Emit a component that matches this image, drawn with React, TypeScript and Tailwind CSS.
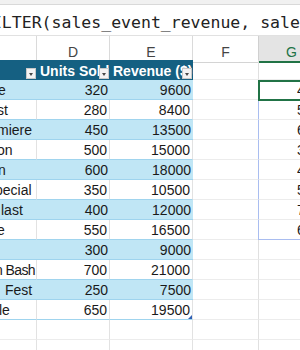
const GRID = "grid grid-cols-[37px_73px_83px_65px_42px]";

type Row = {
  name: string;
  nameCls: string;
  units: number;
  revenue: number;
  spill?: string;
};

// visible tails of the event names in column C (start of each name is scrolled off)
const ROWS: Row[] = [
  { name: "e", nameCls: "ml-[-2px]", units: 320, revenue: 9600, spill: "450" },
  { name: "st", nameCls: "ml-[-3px]", units: 280, revenue: 8400, spill: "500" },
  { name: "miere", nameCls: "ml-[-3px]", units: 450, revenue: 13500, spill: "600" },
  { name: "on", nameCls: "ml-[-3px]", units: 500, revenue: 15000, spill: "350" },
  { name: "n", nameCls: "ml-[-2px]", units: 600, revenue: 18000, spill: "400" },
  { name: "pecial", nameCls: "ml-[-5px]", units: 350, revenue: 10500, spill: "550" },
  { name: "last", nameCls: "ml-[1px]", units: 400, revenue: 12000, spill: "700" },
  { name: "e", nameCls: "ml-[-3px]", units: 550, revenue: 16500, spill: "650" },
  { name: "", nameCls: "", units: 300, revenue: 9000 },
  { name: "n Bash", nameCls: "ml-[-5px] tracking-[-0.6px]", units: 700, revenue: 21000 },
  { name: "Fest", nameCls: "ml-[5px]", units: 250, revenue: 7500 },
  { name: "le", nameCls: "ml-[-1px]", units: 650, revenue: 19500 },
];

function FilterButton() {
  return (
    <span className="absolute right-[1px] bottom-[1px] flex h-[11px] w-[10px] items-center justify-center border border-[#c8c8c8] bg-[#f3f3f3]">
      <span className="mt-[2px] h-0 w-0 border-x-[2.5px] border-t-[3px] border-x-transparent border-t-[#474747]" />
    </span>
  );
}

function ColumnHeaders() {
  const cell = "border-b border-b-[#d4d4d4] pt-[8px] text-center text-[14px] leading-[17px] text-[#444]";
  return (
    <div className={`${GRID} h-[24px] bg-white`}>
      <div className={`${cell} border-r border-r-[#dadada]`} />
      <div className={`${cell} border-r border-r-[#dadada]`}>D</div>
      <div className={`${cell} border-r border-r-[#dadada]`}>E</div>
      <div className={cell}>F</div>
      <div className="border-l border-l-[#d0d0d0] border-b-2 border-b-[#217346] bg-[#e4e4e4] pl-[27px] pt-[8px] text-[14px] leading-[17px] text-[#217346]">
        G
      </div>
    </div>
  );
}

function TableHeader() {
  const head = "relative overflow-hidden whitespace-nowrap bg-[#156082] pl-[3px] pt-[3px] text-[14px] font-bold leading-[17px] text-white";
  return (
    <div className={`${GRID} h-[20px]`}>
      <div className={head}>
        <FilterButton />
      </div>
      <div className={head}>
        Units Sold
        <FilterButton />
      </div>
      <div className={head}>
        Revenue ($)
        <FilterButton />
      </div>
      <div className="border-b border-b-[#ececec]" />
      <div className="border-l border-l-[#e0e0e0] border-b border-b-[#ececec]" />
    </div>
  );
}

function DataRow({ row, index }: { row: Row; index: number }) {
  const banded = index % 2 === 0;
  const isLast = index === ROWS.length - 1;
  const base = banded
    ? "bg-[#c0e6f5] border-b border-b-[#9fd4ee]"
    : "bg-white border-b border-b-[#9fd4ee] border-r border-r-[#e2e2e2]";
  const txt = "pt-[2px] text-[14px] leading-[17px] text-[#1a1a1a] whitespace-nowrap";
  const inSpill = index < 8;

  return (
    <div className={`${GRID} h-[20px]`}>
      <div className={`${base} ${txt} overflow-hidden`}>
        <span className={`inline-block ${row.nameCls}`}>{row.name}</span>
      </div>
      <div className={`${base} ${txt} pr-[2px] text-right`}>{row.units}</div>
      <div className={`${base} ${txt} relative pr-[2px] text-right`}>
        {row.revenue}
        {isLast && (
          <svg className="absolute right-0 bottom-0" width="4" height="4" viewBox="0 0 4 4">
            <path d="M4 0V4H0Z" fill="#2f5fb3" />
          </svg>
        )}
      </div>
      <div className="border-b border-b-[#ececec]" />
      <div
        className={`relative overflow-visible whitespace-nowrap pl-[38px] ${txt} border-l ${
          inSpill ? "border-l-[#a9bdf0]" : "border-l-[#e0e0e0]"
        } border-b ${index === 7 ? "border-b-[#a9bdf0]" : "border-b-[#ececec]"}`}
      >
        <span className="block overflow-hidden">{row.spill ?? ""}</span>
        {index === 0 && (
          <div className="absolute top-0 left-[-1px] z-10 h-[21px] w-[60px] border-2 border-[#217346]" />
        )}
      </div>
    </div>
  );
}

function EmptyRow() {
  const c = "border-b border-b-[#ececec]";
  return (
    <div className={`${GRID} h-[20px]`}>
      <div className={`${c} border-r border-r-[#e2e2e2]`} />
      <div className={`${c} border-r border-r-[#e2e2e2]`} />
      <div className={`${c} border-r border-r-[#e2e2e2]`} />
      <div className={c} />
      <div className={`${c} border-l border-l-[#e0e0e0]`} />
    </div>
  );
}

export default function App() {
  return (
    <div className="h-[350px] w-[300px] overflow-hidden bg-white font-['Liberation_Sans',Arial,sans-serif]">
      {/* ribbon edge */}
      <div className="h-[5px] border-b border-b-[#d9d9d9] bg-[#f1f1f1]" />

      {/* formula bar */}
      <div className="h-[31px] overflow-hidden border-b border-b-[#e1e1e1] bg-white pt-[8px]">
        <div className="ml-[-18px] whitespace-nowrap font-['DejaVu_Sans_Mono',monospace] text-[16.5px] leading-[20px] text-[#222]">
          FILTER(sales_event_revenue, sales_event_revenue[Units Sold]&gt;320)
        </div>
      </div>

      <ColumnHeaders />
      <TableHeader />
      {ROWS.map((row, i) => (
        <DataRow key={i} row={row} index={i} />
      ))}
      <EmptyRow />
      <EmptyRow />
    </div>
  );
}
